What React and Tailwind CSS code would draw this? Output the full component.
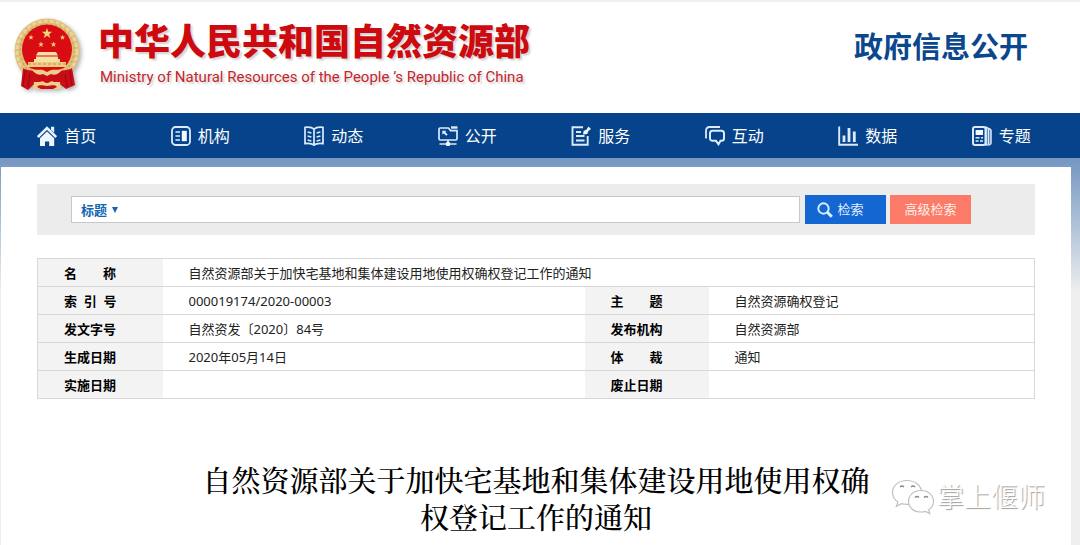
const navItems = [
  { label: '首页', icon: HomeIcon },
  { label: '机构', icon: OrgIcon },
  { label: '动态', icon: BookIcon },
  { label: '公开', icon: ScreenIcon },
  { label: '服务', icon: ServiceIcon },
  { label: '互动', icon: ChatIcon },
  { label: '数据', icon: ChartIcon },
  { label: '专题', icon: NewsIcon },
];

const rows = [
  [['索\u00a0\u00a0引\u00a0\u00a0号', '000019174/2020-00003'], ['主\u3000\u3000题', '自然资源确权登记']],
  [['发文字号', '自然资发〔2020〕84号'], ['发布机构', '自然资源部']],
  [['生成日期', '2020年05月14日'], ['体\u3000\u3000裁', '通知']],
  [['实施日期', ''], ['废止日期', '']],
];

function Icon({ children }) {
  return (
    <svg viewBox="0 0 20 20" className="size-5 shrink-0" fill="none" stroke="#dcebfb" strokeWidth="1.8" aria-hidden="true">
      {children}
    </svg>
  );
}

function HomeIcon() {
  return (
    <Icon>
      <path d="M14 .8h3.200v6l-3.200-3z" fill="#e6f1fc" stroke="none" />
      <path d="M.8 11 10 2l9.200 9" stroke="#e6f1fc" strokeWidth="2.600" />
      <path d="M10 5.400 17.200 12.300V20h-5v-4.600H8V20H3v-7.700z" fill="#eef6ff" stroke="none" />
    </Icon>
  );
}

function OrgIcon() {
  return (
    <Icon>
      <rect x="1" y="1" width="18" height="18" rx="3.5" />
      <path d="M4.500 6h4.500M4.500 10h4.500M4.500 14h4.500" strokeWidth="1.600" />
      <rect x="10.800" y="4.800" width="5" height="10.400" fill="#f4f9ff" stroke="none" />
    </Icon>
  );
}

function BookIcon() {
  return (
    <Icon>
      <path d="M10 3.200C8 1.200 4 1 1 1.400v16.200c3-.4 7-.2 9 1.600 2-1.800 6-2 9-1.600V1.400C16 1 12 1.200 10 3.200zM10 3.200v16" strokeWidth="1.700" />
      <path d="m3.600 6 3.800 1M3.600 10l3.800 1M3.600 14l3.800 1M16.400 6l-3.800 1M16.400 10l-3.800 1M16.400 14l-3.800 1" strokeWidth="1.500" />
    </Icon>
  );
}

function ScreenIcon() {
  return (
    <Icon>
      <path d="M10.400 2H2.200C1.400 2 1 2.500 1 3.200v9.600c0 .8.4 1.200 1.200 1.200h15.600c.8 0 1.200-.4 1.200-1.200V4.600h-6.400z" strokeWidth="1.700" />
      <path d="M13 1.500h6.500" strokeWidth="2.400" />
      <path d="M4.300 4.800h4l-1 1.200 2.400 2.400-1.400 1.400-2.400-2.400-1.600 1.200z" fill="#dcebfb" stroke="none" />
      <path d="M10 14v3.500M1.500 18h17" strokeWidth="1.700" />
      <rect x="8" y="16" width="4" height="4" rx="1" fill="#f4f9ff" stroke="none" />
    </Icon>
  );
}

function ServiceIcon() {
  return (
    <Icon>
      <path d="M12 1.200H1.500v17.600h15.200V10" strokeWidth="1.900" />
      <path d="M5 6h5M5 10h8.500M5 14.500h8.500" />
      <path d="m12.100 8.500.5-3.500 3-1.400L17.500.4l2.600 2.600-2.700 2.100-1.200 2.900z" fill="#f4f9ff" stroke="none" />
    </Icon>
  );
}

function ChatIcon() {
  return (
    <Icon>
      <path d="M1 12.500V4.500C1 2.500 2.500 1 4.500 1H15" />
      <path
        d="M7.500 4.800h9c1.500 0 2.500 1 2.500 2.500v5c0 1.500-1 2.500-2.500 2.500H15.500l-2 3.500-2.500-3.500H7.500C6 14.800 5 13.800 5 12.300v-5c0-1.500 1-2.500 2.500-2.500z"
        strokeWidth="2"
      />
    </Icon>
  );
}

function ChartIcon() {
  return (
    <Icon>
      <path d="M1.200.5v18.300H20" strokeWidth="1.900" />
      <path d="M6 9.500V16M11 2v14M16.300 5.500V16" strokeWidth="2.800" />
    </Icon>
  );
}

function NewsIcon() {
  return (
    <Icon>
      <path d="M14 1.300l4 1.800c.6.300 1 .8 1 1.400V17c0 .8-.8 1.500-1.600 1.700L14 19z" fill="#dcebfb" fillOpacity=".35" strokeWidth="1.500" />
      <rect x="1" y="1" width="12.500" height="18" rx="2" strokeWidth="2" />
      <path d="M16.500 3v15" strokeWidth="1.300" />
      <rect x="3.600" y="4" width="7.400" height="5" fill="#f4f9ff" stroke="none" />
      <path d="M3.600 11.800h4M9 11.800h2M3.600 15h3M8 15h3" strokeWidth="1.500" />
    </Icon>
  );
}

function Star({ x, y, r }) {
  return (
    <path
      transform={`translate(${x} ${y}) scale(${r})`}
      d="M0-1 .24-.32.95-.31.38.12.59.81 0 .4-.59.81-.38.12-.95-.31-.24-.32z"
      fill="#f3d27a"
    />
  );
}

function Emblem() {
  return (
    <svg viewBox="0 0 68 74" className="h-[74px] w-[68px] shrink-0 drop-shadow-[2px_2px_2px_rgba(0,0,0,0.3)]" role="img" aria-label="国徽">
      <circle cx="33" cy="33" r="32.500" fill="#dfbe7c" />
      <circle cx="33" cy="33" r="30" fill="none" stroke="#ecd398" strokeWidth="3" strokeDasharray="4 2" />
      <circle cx="33" cy="33" r="27" fill="none" stroke="#cfa45a" strokeWidth="1.500" strokeDasharray="2 3" />
      <circle cx="33" cy="31.500" r="25" fill="#d80c12" />
      <Star x={33} y={15.500} r={5.500} />
      <Star x={17} y={19.500} r={2.800} />
      <Star x={48.500} y={19.500} r={2.800} />
      <Star x={27} y={26.500} r={3} />
      <Star x={39.500} y={26.500} r={3} />
      <path d="M24 34h18l2 3.500H22zM22 38.500h22V41H22zM20 41h26v3H20z" fill="#f6e1a4" />
      <path d="M14 44h38v5H14z" fill="#edcd85" />
      <path d="M14 46h38" stroke="#b87b2b" strokeWidth=".7" strokeDasharray="3 2" />
      <path d="M9 50c4 3 9 2 14 3h20c5-1 10 0 15-3l3 17-9 4-5-4H19l-5 5-7-4z" fill="#c90d17" />
      <path d="M17 50c5 3 8 1 12 2l4 2 4-2c4-1 7 1 12-2-3 6-8 8-12 6l-4 2-4-2c-4 2-9 0-12-6z" fill="#efcf87" />
      <path d="M20 64h6c3-2 4 1 7 1s4-3 7-1h6l1 7H19z" fill="#efcf87" />
      <path d="M23 69c3-3 6-1 10-1s7-2 10 1l-4 2H27z" fill="#c90d17" />
      <path d="m11 53-2 15M16 56l-2 13M56 53l2 15M51 56l2 13" stroke="#93040c" strokeWidth=".8" />
    </svg>
  );
}

function WeChatMark() {
  return (
    <svg viewBox="0 0 44 36" className="h-9 w-11" fill="#fff" stroke="#c0c0c0" strokeWidth="1.200" aria-hidden="true">
      <path d="M16 1.500C7.600 1.500 1.500 6.600 1.500 13.500c0 4 2.100 7.300 5.400 9.500l-1.500 4.300 5.200-2.700c1.700.5 3.500.7 5.400.7 8.400 0 14.600-5 14.600-11.800S24.400 1.500 16 1.500z" />
      <path d="M30 11.500c-7.200 0-12.500 4.700-12.500 10.800S22.800 33 30 33c1.600 0 3.100-.2 4.500-.6l4.300 2.200-1.200-3.600c3-2 4.900-5 4.900-8.700 0-6.100-5.300-10.800-12.500-10.800z" />
      <path d="M9 8q2-2 4 0M20 8q2-2 4 0M24 18.500q2-2 4 0M33 18.500q2-2 4 0" fill="none" stroke="#888" strokeWidth="1.300" />
    </svg>
  );
}

function LabelCell({ children }) {
  return (
    <th scope="row" className="border-y border-[#d8d8d8] bg-[#f3f3f3] pl-[26px] text-left font-bold whitespace-nowrap text-black">
      {children}
    </th>
  );
}

function ValueCell({ children, colSpan }) {
  return (
    <td colSpan={colSpan} className="border-y border-[#d8d8d8] pl-[26px] text-[#222]">
      {children}
    </td>
  );
}

export default function App() {
  return (
    <div className="relative flex min-h-screen flex-col bg-[#efefef] font-['Noto_Sans','Noto_Sans_CJK_SC',sans-serif]">
      <header className="flex h-[113px] items-start justify-between border-t-2 border-[#f0f0f0] bg-white pr-[52px] pl-[14px]">
        <div className="flex pt-4">
          <Emblem />
          <div className="ml-4 text-shadow-[2px_2px_2px_rgba(0,0,0,0.18)]">
            <h1 className="text-[36px] leading-[48px] font-black text-[#cc0a0f]">中华人民共和国自然资源部</h1>
            <p className="ml-[2px] font-['Roboto','Noto_Sans',sans-serif] text-[15px] leading-[22px] text-[#c4262b]">
              Ministry of Natural Resources of the People ’s Republic of China
            </p>
          </div>
        </div>
        <p className="pt-6 text-[29px] leading-[42px] font-bold text-[#0b478c]">政府信息公开</p>
      </header>

      <nav className="grid h-[45px] grid-cols-8 bg-[#06438a] pr-3">
        {navItems.map(({ label, icon: NavIcon }) => (
          <a key={label} href="#" className="flex items-center justify-center gap-[7px] text-[16px] leading-6 text-white">
            <NavIcon />
            {label}
          </a>
        ))}
      </nav>

      <div className="flex flex-1 flex-col bg-linear-to-b from-[#7496c0] via-[#efefef] via-35% to-[#efefef] pt-[9px] pr-[9px] pl-px">
        <main className="flex-1 bg-white px-9 pt-[17px]">
          <form className="flex h-[51px] items-center bg-[#ececec] pr-16 pl-[34px]" onSubmit={(e) => e.preventDefault()}>
            <div className="flex h-[27px] flex-1 items-center border border-[#c8c8c8] bg-white pl-[9px]">
              <select aria-label="检索范围" className="w-[30px] appearance-none text-[13px] leading-5 font-bold text-[#1265b2] outline-none">
                <option>标题</option>
              </select>
              <svg viewBox="0 0 6 6" className="ml-px size-[6px]" aria-hidden="true">
                <path d="M0 0h6L3 6z" fill="#1265b2" />
              </svg>
              <input aria-label="检索内容" className="h-full min-w-0 flex-1 px-2 text-[13px] outline-none" />
            </div>
            <button type="submit" className="ml-[5px] flex h-[29px] w-[81px] items-center justify-center gap-1 bg-[#1467d3] pr-[10px] text-[13px] text-[#e3f0ff]">
              <svg viewBox="0 0 16 16" className="size-4" fill="none" stroke="#d7f0ff" aria-hidden="true">
                <circle cx="6.500" cy="6.500" r="5.200" strokeWidth="1.900" />
                <path d="m10.300 10.300 4.500 4.500" strokeWidth="3" />
              </svg>
              检索
            </button>
            <button type="button" className="ml-1 h-[29px] w-[81px] bg-[#fc7a68] text-[13px] text-[#fff0e8]">高级检索</button>
          </form>

          <table className="mt-[23px] w-full table-fixed border-collapse border border-[#d8d8d8] text-[13px] leading-[18px]">
            <colgroup>
              <col className="w-[125px]" />
              <col />
              <col className="w-[124px]" />
              <col className="w-[326px]" />
            </colgroup>
            <tbody>
              <tr className="h-7">
                <LabelCell>名{'\u3000\u3000'}称</LabelCell>
                <ValueCell colSpan={3}>自然资源部关于加快宅基地和集体建设用地使用权确权登记工作的通知</ValueCell>
              </tr>
              {rows.map(([left, right]) => (
                <tr key={left[0]} className="h-7">
                  <LabelCell>{left[0]}</LabelCell>
                  <ValueCell>{left[1]}</ValueCell>
                  <LabelCell>{right[0]}</LabelCell>
                  <ValueCell>{right[1]}</ValueCell>
                </tr>
              ))}
            </tbody>
          </table>

          <h2 className="mx-auto mt-[62px] max-w-[680px] text-center font-['Noto_Serif_CJK_SC','Noto_Sans_CJK_SC',serif] text-[29px] leading-[37px] font-medium text-black">
            自然资源部关于加快宅基地和集体建设用地使用权确权登记工作的通知
          </h2>
        </main>
      </div>

      <div className="absolute right-[35px] bottom-7 flex items-center gap-[2px]">
        <WeChatMark />
        <span className="text-[27px] leading-10 font-light text-white text-shadow-[1px_1px_1px_#999]">掌上偃师</span>
      </div>
    </div>
  );
}
